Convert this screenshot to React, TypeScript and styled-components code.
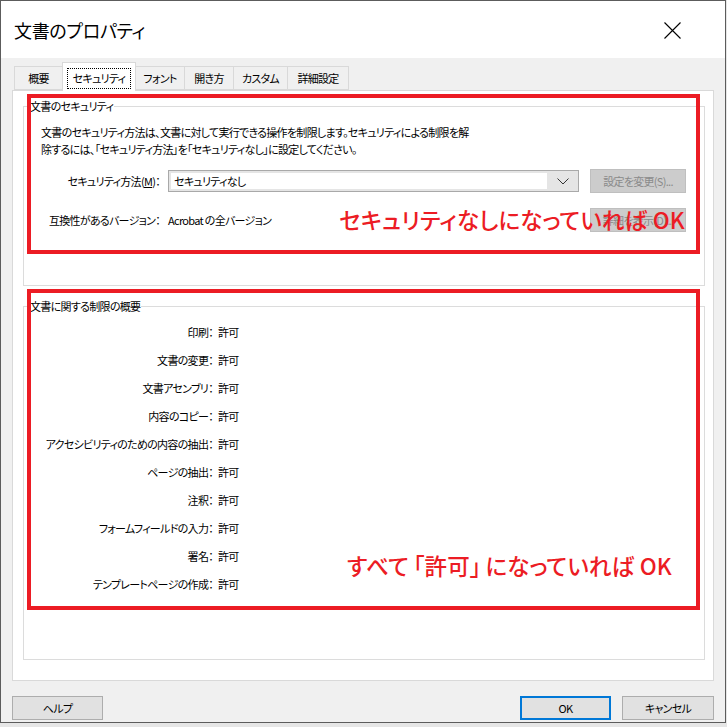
import React from 'react';
import styled, { createGlobalStyle } from 'styled-components';

const GlobalStyle = createGlobalStyle`
  html, body {
    margin: 0;
    padding: 0;
    background: #e6e6e6;
  }
  body {
    font-family: "Noto Sans CJK JP", "Noto Sans", sans-serif;
    font-size: 11px;
    letter-spacing: -0.7px;
    color: #000;
    font-feature-settings: "palt" 1;
  }
`;

const Window = styled.div`
  width: 724px;
  height: 721px;
  border: 1px solid #5c5c5c;
  background: #f0f0f0;
  display: flex;
  flex-direction: column;
  overflow: hidden;
`;

const TitleBar = styled.div`
  flex: none;
  height: 57px;
  background: #fff;
  display: flex;
  align-items: center;
  justify-content: space-between;
  padding-left: 13px;
`;

const Title = styled.h1`
  margin: 0;
  font-size: 18px;
  font-weight: 400;
  letter-spacing: -0.3px;
  line-height: 24px;
`;

const CloseButton = styled.button`
  width: 18px;
  height: 18px;
  padding: 0;
  margin: 2px 44px 0 0;
  border: none;
  background: none;
  display: flex;
  align-items: center;
  justify-content: center;
`;

const Body = styled.div`
  flex: 1;
  display: flex;
  flex-direction: column;
  padding: 4px 11px 2px;
`;

const TabList = styled.div`
  flex: none;
  display: flex;
  align-items: flex-end;
  height: 28px;
  padding-left: 2px;
  position: relative;
  z-index: 1;
`;

const Tab = styled.div<{ $active?: boolean; $width: number }>`
  width: ${p => p.$width}px;
  height: ${p => (p.$active ? '29px' : '24px')};
  margin-bottom: ${p => (p.$active ? '-1px' : '0')};
  margin-left: -1px;
  border: 1px solid #d9d9d9;
  border-bottom: ${p => (p.$active ? 'none' : '1px solid #d9d9d9')};
  background: ${p => (p.$active ? '#fff' : '#f0f0f0')};
  display: flex;
  align-items: center;
  justify-content: center;
  box-sizing: border-box;
  white-space: nowrap;
  padding-top: ${p => (p.$active ? '2px' : '0')};
  &:first-child {
    margin-left: 0;
  }
`;

const FocusLabel = styled.span`
  border: 1px dotted #000;
  width: 62px;
  height: 19px;
  display: flex;
  align-items: center;
  justify-content: center;
`;

const Panel = styled.div`
  flex: none;
  position: relative;
  height: 582px;
  background: #fff;
  border: 1px solid #d9d9d9;
  padding: 7px 8px 0 10px;
  display: flex;
  flex-direction: column;
  gap: 12px;
`;

const GroupBox = styled.fieldset<{ $height: number }>`
  margin: 0;
  min-width: 0;
  height: ${p => p.$height}px;
  box-sizing: border-box;
  border: 1px solid #dcdcdc;
  padding: 0 18px 0 17px;
`;

const Legend = styled.legend`
  padding: 0 1px;
  margin-left: -12px;
  line-height: 16px;
`;

const Description = styled.p`
  margin: 10px 0 0;
  line-height: 17px;
  white-space: nowrap;
`;

const FormRow = styled.div<{ $gap: number }>`
  display: flex;
  align-items: center;
  height: 24px;
  margin-top: ${p => p.$gap}px;
`;

const FormLabel = styled.span`
  width: 119px;
  text-align: right;
  margin-right: 8px;
  flex: none;
  white-space: nowrap;
`;

const FormValue = styled.span`
  flex: 1;
  white-space: nowrap;
`;

const Combo = styled.div`
  flex: 1;
  height: 22px;
  box-sizing: border-box;
  border: 1px solid #a9a9a9;
  background: #e5e5e5;
  display: flex;
  padding: 2px 0 2px 2px;
`;

const ComboField = styled.div`
  flex: 1;
  background: #fff;
  display: flex;
  align-items: center;
  padding-left: 3px;
`;

const ComboArrow = styled.div`
  width: 31px;
  display: flex;
  align-items: center;
  justify-content: center;
`;

const Button = styled.button<{ $primary?: boolean; $width: number }>`
  width: ${p => p.$width}px;
  height: 24px;
  flex: none;
  box-sizing: border-box;
  font-family: inherit;
  font-size: 11px;
  letter-spacing: -0.7px;
  font-feature-settings: "palt" 1;
  color: ${p => (p.disabled ? '#8a8a8a' : '#000')};
  background: ${p => (p.disabled ? '#cccccc' : '#e1e1e1')};
  border: ${p =>
    p.$primary ? '2px solid #0078d7' : p.disabled ? '1px solid #bfbfbf' : '1px solid #adadad'};
  padding: 0;
`;

const Spacer = styled.span`
  width: 11px;
  flex: none;
`;

const PermissionList = styled.div`
  margin-top: 4px;
  display: flex;
  flex-direction: column;
`;

const PermissionRow = styled.div`
  display: flex;
  align-items: center;
  height: 28px;
`;

const PermissionLabel = styled.span`
  width: 172px;
  text-align: right;
  flex: none;
  white-space: nowrap;
`;

const PermissionValue = styled.span`
  margin-left: 5px;
`;

const Footer = styled.div`
  display: flex;
  justify-content: space-between;
  margin-top: 15px;
`;

const FooterRight = styled.div`
  display: flex;
  gap: 11px;
`;

/* red callout frames drawn over the dialog */
const Callout = styled.div<{ $top: number; $height: number }>`
  position: absolute;
  left: 14px;
  top: ${p => p.$top}px;
  width: 673px;
  height: ${p => p.$height}px;
  box-sizing: border-box;
  border: 4px solid #ec1c24;
  pointer-events: none;
`;

const CalloutText = styled.div<{ $top: number; $right: number }>`
  position: absolute;
  top: ${p => p.$top}px;
  right: ${p => p.$right}px;
  color: #ec1c24;
  font-size: 22.5px;
  font-weight: 500;
  letter-spacing: 0.2px;
  line-height: 26px;
  white-space: nowrap;
`;

const Bracket = styled.span`
  margin: 0 4px;
`;

const tabs = [
  { label: '概要', width: 49 },
  { label: 'セキュリティ', width: 74 },
  { label: 'フォント', width: 50 },
  { label: '開き方', width: 50 },
  { label: 'カスタム', width: 55 },
  { label: '詳細設定', width: 62 },
];

const permissions = [
  '印刷',
  '文書の変更',
  '文書アセンブリ',
  '内容のコピー',
  'アクセシビリティのための内容の抽出',
  'ページの抽出',
  '注釈',
  'フォームフィールドの入力',
  '署名',
  'テンプレートページの作成',
];

export default function App() {
  return (
    <>
      <GlobalStyle />
      <Window>
        <TitleBar>
          <Title>文書のプロパティ</Title>
          <CloseButton aria-label="閉じる">
            <svg width="17" height="17" viewBox="0 0 17 17">
              <path d="M0.5 0.5 L16.5 16.5 M16.5 0.5 L0.5 16.5" stroke="#000" strokeWidth="1.1" fill="none" />
            </svg>
          </CloseButton>
        </TitleBar>
        <Body>
          <TabList>
            {tabs.map(t => {
              const active = t.label === 'セキュリティ';
              return (
                <Tab key={t.label} $active={active} $width={t.width}>
                  {active ? <FocusLabel>{t.label}</FocusLabel> : t.label}
                </Tab>
              );
            })}
          </TabList>
          <Panel>
            <GroupBox $height={188}>
              <Legend>文書のセキュリティ</Legend>
              <Description>
                文書のセキュリティ方法は、文書に対して実行できる操作を制限します。セキュリティによる制限を解
                <br />
                除するには、「セキュリティ方法」を「セキュリティなし」に設定してください。
              </Description>
              <FormRow $gap={11}>
                <FormLabel>
                  セキュリティ方法(<u>M</u>)：
                </FormLabel>
                <Combo>
                  <ComboField>セキュリティなし</ComboField>
                  <ComboArrow>
                    <svg width="12" height="7" viewBox="0 0 12 7">
                      <path d="M0.5 0.5 L6 6 L11.5 0.5" stroke="#333" strokeWidth="1" fill="none" />
                    </svg>
                  </ComboArrow>
                </Combo>
                <Spacer />
                <Button $width={96} disabled>
                  設定を変更(S)...
                </Button>
              </FormRow>
              <FormRow $gap={15}>
                <FormLabel>互換性があるバージョン：</FormLabel>
                <FormValue>Acrobat の全バージョン</FormValue>
                <Button $width={96} disabled>
                  詳細を表示(D)...
                </Button>
              </FormRow>
            </GroupBox>
            <GroupBox $height={362}>
              <Legend>文書に関する制限の概要</Legend>
              <PermissionList>
                {permissions.map(p => (
                  <PermissionRow key={p}>
                    <PermissionLabel>{p}：</PermissionLabel>
                    <PermissionValue>許可</PermissionValue>
                  </PermissionRow>
                ))}
              </PermissionList>
            </GroupBox>
            <Callout $top={3} $height={160}>
              <CalloutText $top={108} $right={11}>
                セキュリティなしになっていれば OK
              </CalloutText>
            </Callout>
            <Callout $top={198} $height={321}>
              <CalloutText $top={259} $right={24}>
                すべて<Bracket>「許可」</Bracket>になっていれば OK
              </CalloutText>
            </Callout>
          </Panel>
          <Footer>
            <Button $width={91}>ヘルプ</Button>
            <FooterRight>
              <Button $width={91} $primary>
                OK
              </Button>
              <Button $width={92}>キャンセル</Button>
            </FooterRight>
          </Footer>
        </Body>
      </Window>
    </>
  );
}
